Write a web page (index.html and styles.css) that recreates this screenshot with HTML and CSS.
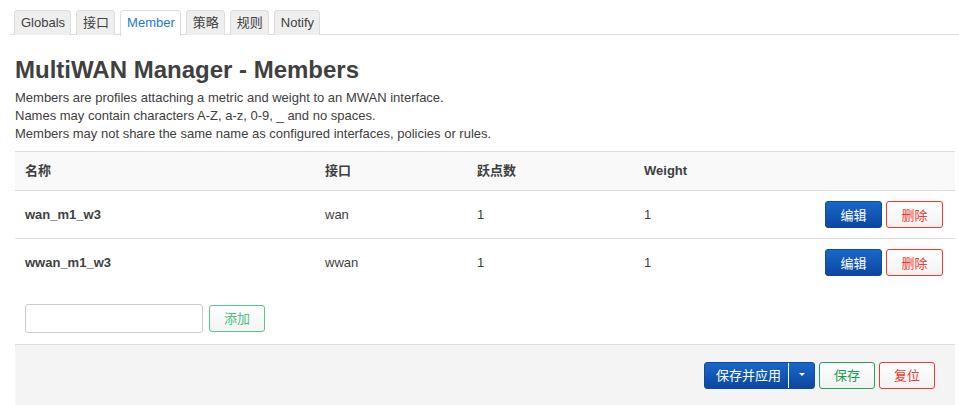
FILE: index.html
```html
<!DOCTYPE html>
<html lang="zh">
<head>
<meta charset="utf-8">
<title>MultiWAN Manager - Members</title>
<link rel="stylesheet" href="styles.css">
</head>
<body>
<ul class="tabs">
  <li class="tab">Globals</li>
  <li class="tab">接口</li>
  <li class="tab active">Member</li>
  <li class="tab">策略</li>
  <li class="tab">规则</li>
  <li class="tab">Notify</li>
</ul>
<div class="content">
  <h2 class="title">MultiWAN Manager - Members</h2>
  <div class="desc">Members are profiles attaching a metric and weight to an MWAN interface.<br>Names may contain characters A-Z, a-z, 0-9, _ and no spaces.<br>Members may not share the same name as configured interfaces, policies or rules.</div>
  <table class="tbl">
    <colgroup><col class="c1"><col class="c2"><col class="c3"><col class="c4"><col></colgroup>
    <thead>
      <tr><th>名称</th><th>接口</th><th>跃点数</th><th>Weight</th><th></th></tr>
    </thead>
    <tbody>
      <tr><td class="name">wan_m1_w3</td><td>wan</td><td>1</td><td>1</td><td class="act"><span class="btn blue">编辑</span><span class="btn red">删除</span></td></tr>
      <tr><td class="name">wwan_m1_w3</td><td>wwan</td><td>1</td><td>1</td><td class="act"><span class="btn blue">编辑</span><span class="btn red">删除</span></td></tr>
    </tbody>
  </table>
  <div class="addrow"><input class="inp" type="text"><span class="btn add">添加</span></div>
  <div class="footer">
    <span class="split"><span class="main">保存并应用</span><span class="arrow"><svg width="8" height="4" viewBox="0 0 8 4"><path d="M1 0h6L4 3z" fill="#fff"/></svg></span></span>
    <span class="btn green">保存</span>
    <span class="btn red">复位</span>
  </div>
</div>
</body>
</html>
```
FILE: styles.css
```css
* { box-sizing: border-box; }
body {
  margin: 0;
  font-family: "Liberation Sans", Arial, "Noto Sans CJK SC", sans-serif;
  font-size: 13px;
  line-height: 18px;
  color: #404040;
  background: #fff;
}
.tabs {
  list-style: none;
  margin: 10px 0 0 10px;
  padding: 0 0 0 4px;
  display: flex;
  gap: 5px;
  border-bottom: 1px solid #ddd;
  height: 25px;
}
.tab {
  height: 25px;
  padding: 0 5px 0 6px;
  line-height: 23px;
  background: #eee;
  border: 1px solid #ddd;
  border-bottom: none;
  border-radius: 4px 4px 0 0;
  color: #404040;
}
.tab.active {
  background: #fff;
  color: #1e78d6;
  height: 26px;
}
.content {
  padding: 0 4px 0 15px;
}
.title {
  margin: 17px 0 0;
  font-size: 24px;
  line-height: 36px;
  font-weight: bold;
  color: #404040;
}
.desc {
  margin-top: 1px;
}
.tbl {
  width: 940px;
  margin-top: 8px;
  border-collapse: collapse;
  table-layout: fixed;
}
.c1 { width: 300px; }
.c2 { width: 152px; }
.c3 { width: 167px; }
.c4 { width: 150px; }
.tbl th {
  text-align: left;
  font-weight: bold;
  padding: 10px;
  background: #f9f9f9;
  border-top: 1px solid #ddd;
  border-bottom: 1px solid #ddd;
  height: 39px;
}
.tbl td {
  padding: 10px;
  height: 48px;
  vertical-align: middle;
}
.tbl tbody tr:first-child td { border-bottom: 1px solid #ddd; }
.tbl td.name { font-weight: bold; }
.tbl td.act {
  text-align: right;
  padding-right: 12px;
  white-space: nowrap;
}
.btn {
  display: inline-flex;
  align-items: center;
  justify-content: center;
  height: 27px;
  width: 57px;
  border-radius: 3px;
  border: 1px solid;
  font-family: "Noto Sans CJK SC", sans-serif;
  font-size: 13px;
  vertical-align: middle;
}
.act .btn + .btn { margin-left: 4px; }
.blue {
  color: #fff;
  background: linear-gradient(#1a68c9, #0b47a0);
  border-color: #0d4aa6;
}
.red {
  color: #f4372a;
  border-color: #f4372a;
  background: linear-gradient(#fff, #f2f2f2);
}
.green {
  color: #14a04e;
  border-color: #1fa558;
  background: linear-gradient(#fff, #f2f2f2);
}
.add {
  color: #47c27f;
  border-color: #55c98c;
  width: 56px;
  background: linear-gradient(#fff, #f4f4f4);
  margin-left: 6px;
}
.addrow {
  display: flex;
  align-items: center;
  padding: 17px 10px 11px;
}
.inp {
  width: 178px;
  height: 29px;
  border: 1px solid #ccc;
  border-radius: 3px;
  margin: 0;
}
.footer {
  width: 940px;
  height: 61px;
  background: #f4f4f4;
  border-top: 1px solid #ddd;
  display: flex;
  justify-content: flex-end;
  align-items: flex-start;
  gap: 4px;
  padding: 17px 20px 0 0;
}
.split {
  display: inline-flex;
  height: 27px;
  border-radius: 3px;
  background: linear-gradient(#1a68c9, #0b47a0);
  border: 1px solid #0d4aa6;
  color: #fff;
  font-family: "Noto Sans CJK SC", sans-serif;
}
.split .main {
  width: 84px;
  display: flex;
  align-items: center;
  justify-content: center;
  border-right: 1px solid #fff;
  padding-left: 4px;
}
.split .arrow {
  width: 25px;
  display: flex;
  align-items: center;
  justify-content: center;
}
.footer .btn { width: 56px; }
```
